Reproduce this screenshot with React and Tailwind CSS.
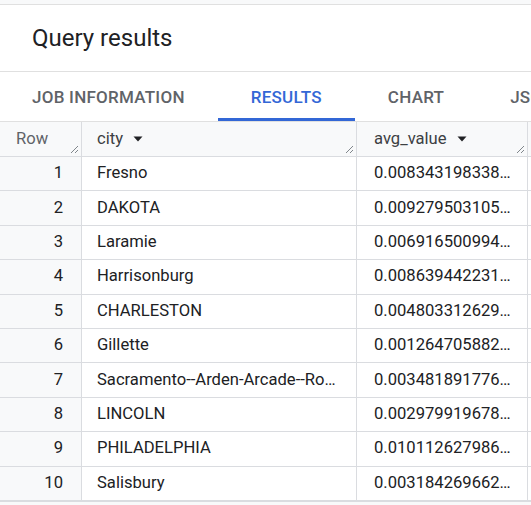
import React from 'react';

const rows = [
    ['1', 'Fresno', '0.008343198338…'],
    ['2', 'DAKOTA', '0.009279503105…'],
    ['3', 'Laramie', '0.006916500994…'],
    ['4', 'Harrisonburg', '0.008639442231…'],
    ['5', 'CHARLESTON', '0.004803312629…'],
    ['6', 'Gillette', '0.001264705882…'],
    ['7', 'Sacramento--Arden-Arcade--Ro…', '0.003481891776…'],
    ['8', 'LINCOLN', '0.002979919678…'],
    ['9', 'PHILADELPHIA', '0.010112627986…'],
    ['10', 'Salisbury', '0.003184269662…'],
];

const tabs = ['JOB INFORMATION', 'RESULTS', 'CHART', 'JSON'];

function ResizeHandle() {
    return (
        <svg className="absolute right-[3px] bottom-[3px]" width="8" height="8" viewBox="0 0 8 8">
            <line x1="1" y1="8" x2="8" y2="1" stroke="#80868b" strokeWidth="1" />
            <line x1="5" y1="8" x2="8" y2="5" stroke="#80868b" strokeWidth="1" />
        </svg>
    );
}

function SortArrow() {
    return (
        <svg className="ml-[10px]" width="10" height="6" viewBox="0 0 10 6">
            <polygon points="0.5,0.5 9.5,0.5 5,5.5" fill="#202124" />
        </svg>
    );
}

function HeaderCell({ children, arrow, className = '' }) {
    return (
        <div className={`relative flex h-full items-center border-r border-[#dadce0] ${className}`}>
            {children}
            {arrow && <SortArrow />}
            <ResizeHandle />
        </div>
    );
}

export default function App() {
    return (
        <div className="h-[505px] w-[531px] overflow-hidden bg-white font-['Roboto',sans-serif]">
            <div className="h-[4px] bg-[#f8f9fa]" />
            <div className="h-px bg-[#e0e0e0]" />

            {/* title */}
            <div className="flex h-[67px] items-center border-b border-[#e0e0e0] pl-8">
                <h1 className="text-[24px] text-[#202124]">Query results</h1>
            </div>

            {/* tabs */}
            <div className="-ml-px flex h-[50px] border-b border-[#e0e0e0] whitespace-nowrap">
                {tabs.map((t) => (
                    <div
                        key={t}
                        className={`flex items-center border-b-[3px] px-[33px] pt-[5px] text-[17px] font-medium tracking-[0.25px] ${
                            t === 'RESULTS' ? 'border-[#3367d6] text-[#3367d6]' : 'border-transparent text-[#5f6368]'
                        }`}
                    >
                        {t}
                    </div>
                ))}
            </div>

            {/* table */}
            <div className="text-[16.6px]">
                <div className="grid h-[35px] grid-cols-[82px_275px_171px_1fr] border-b border-[#dadce0] bg-[#f8f9fa]">
                    <HeaderCell className="pl-4 text-[#5f6368]">Row</HeaderCell>
                    <HeaderCell arrow className="pl-[15px] text-[#3c4043]">city</HeaderCell>
                    <HeaderCell arrow className="pl-[17px] text-[#3c4043]">avg_value</HeaderCell>
                    <div />
                </div>
                {rows.map(([n, city, val]) => (
                    <div
                        key={n}
                        className="grid h-[34.4px] grid-cols-[82px_275px_171px_1fr] border-b border-[#dadce0] text-[#202124]"
                    >
                        <div className="flex items-center justify-end border-r border-[#dadce0] bg-[#f8f9fa] pr-[18px]">{n}</div>
                        <div className="flex items-center overflow-hidden border-r border-[#dadce0] pl-[15px] pr-2">
                            <span className="whitespace-nowrap">{city}</span>
                        </div>
                        <div className="flex items-center overflow-hidden border-r border-[#dadce0] pl-[17px] pr-2">
                            <span className="whitespace-nowrap">{val}</span>
                        </div>
                        <div />
                    </div>
                ))}
                <div className="h-[10px] border-t border-[#dadce0] bg-[#f8f9fa]" />
            </div>
        </div>
    );
}
